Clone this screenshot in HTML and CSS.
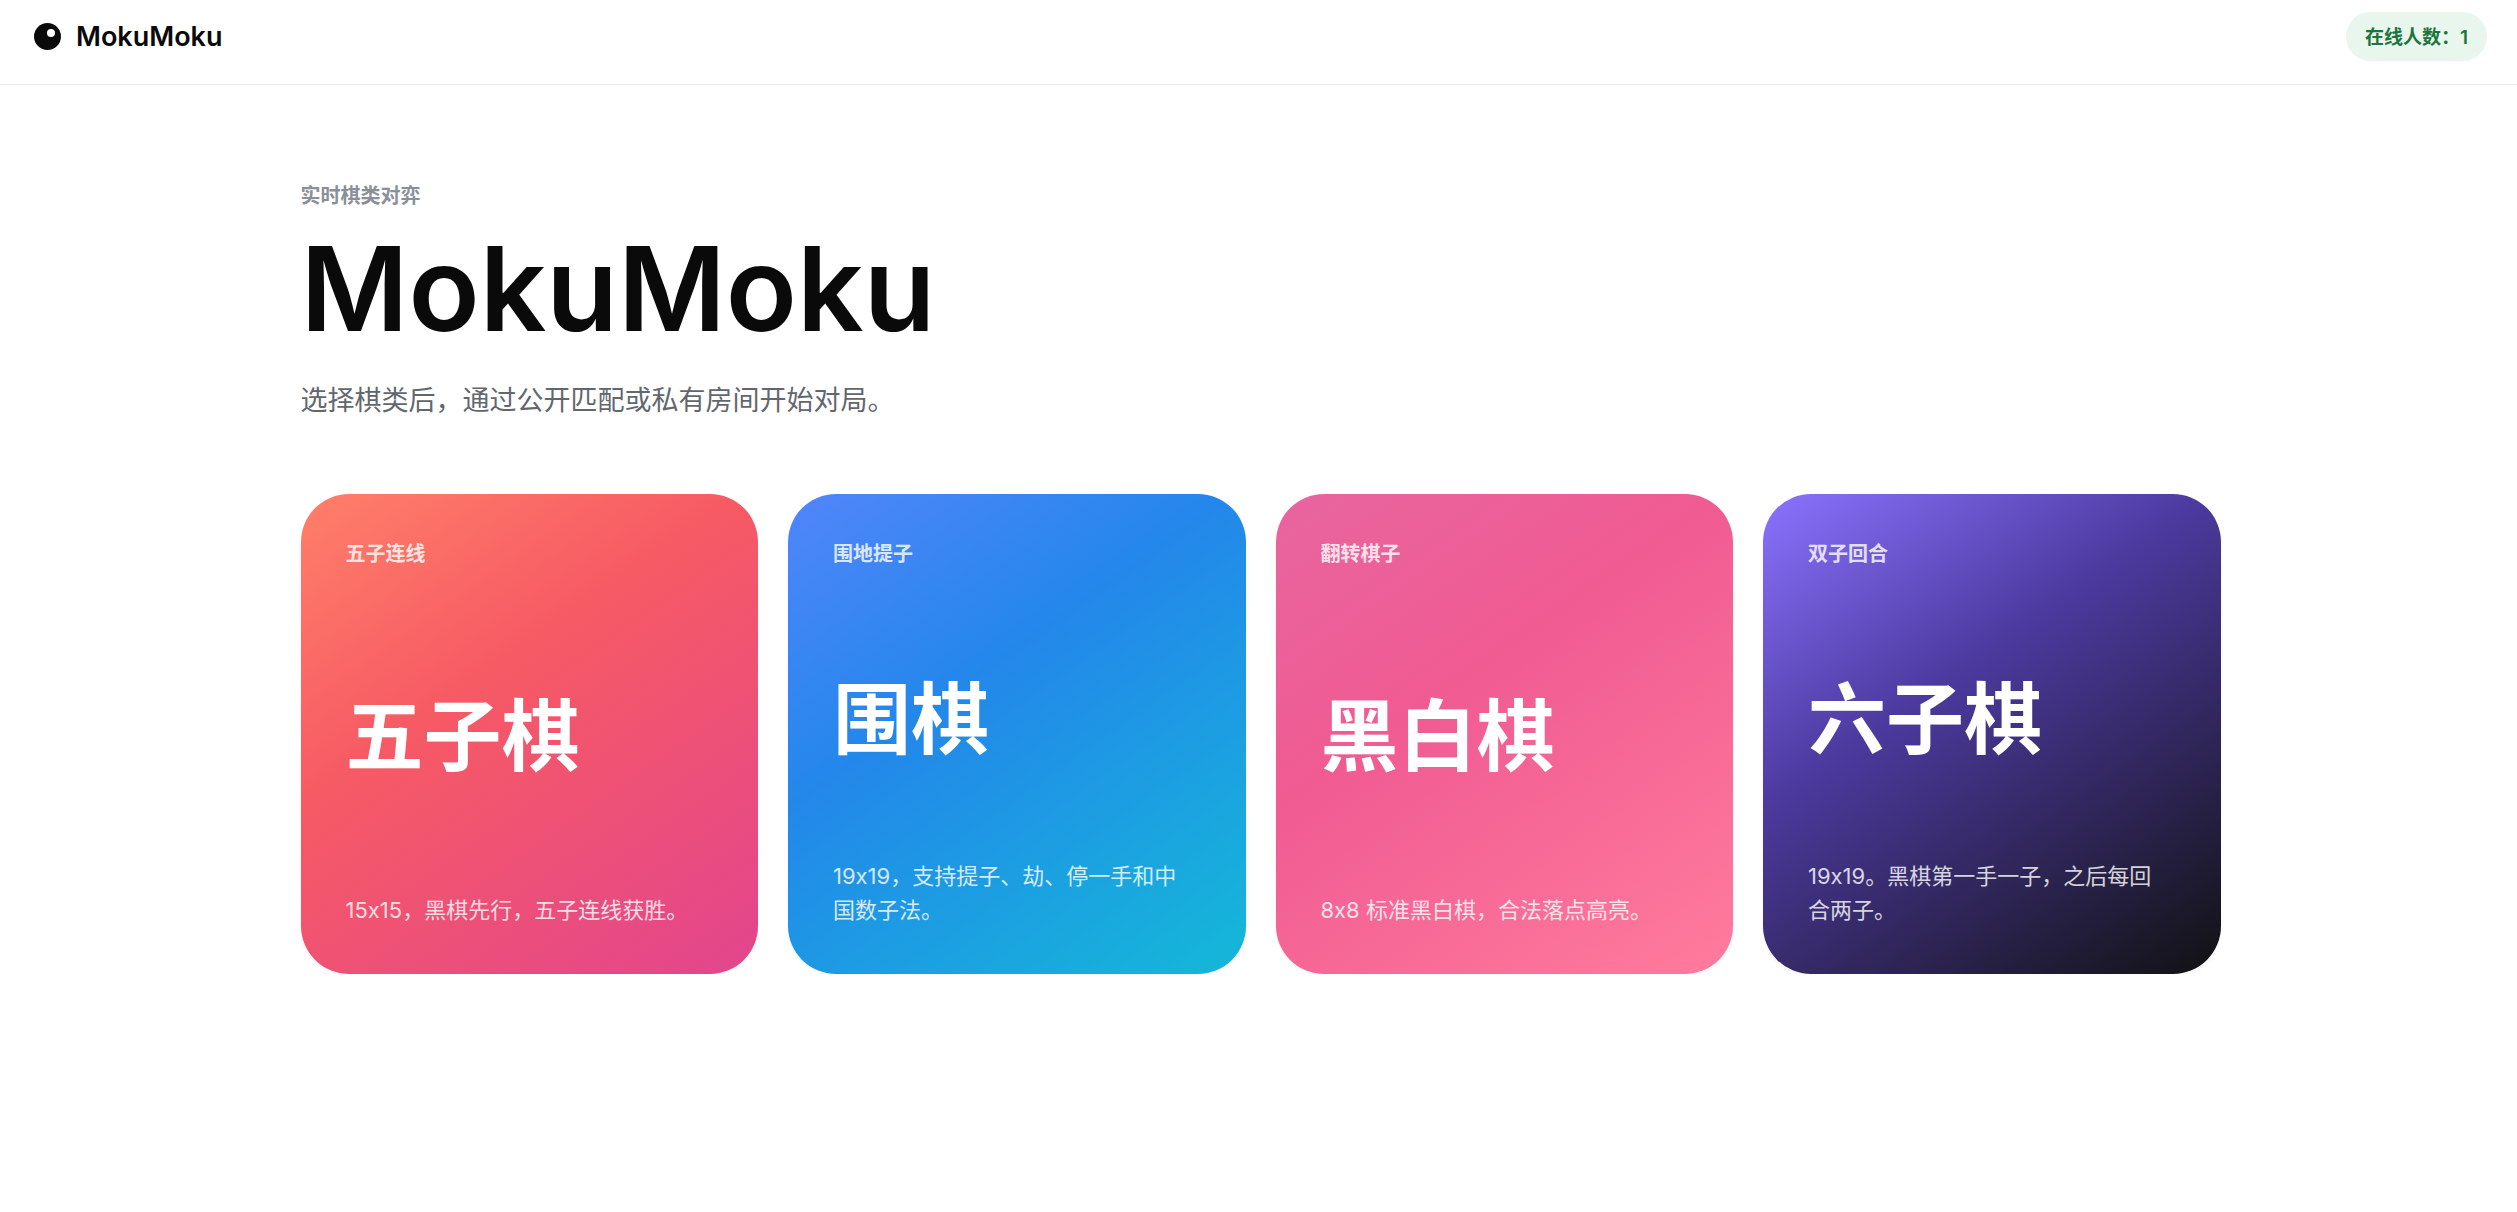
FILE: index.html
```html
<!DOCTYPE html>
<html lang="zh-CN">
	<head>
		<meta charset="utf-8">
		<title>MokuMoku</title>
		<link rel="stylesheet" href="styles.css">
	</head>
	<body>
		<header class="topbar">
			<a class="brand" href="#">
				<svg class="brand-mark" viewBox="0 0 27 27" aria-hidden="true">
					<circle cx="13.5" cy="13.5" r="13.5" fill="#0a0a0a"/>
					<circle cx="17" cy="10" r="4" fill="#fff"/>
				</svg>
				<span>MokuMoku</span>
			</a>
			<span class="online">在线人数：1</span>
		</header>

		<main class="home">
			<p class="eyebrow">实时棋类对弈</p>
			<h1 class="title">MokuMoku</h1>
			<p class="lead">选择棋类后，通过公开匹配或私有房间开始对局。</p>

			<div class="games">
				<a class="game gomoku" href="#gomoku">
					<span class="tag">五子连线</span>
					<strong class="name">五子棋</strong>
					<span class="desc">15x15，黑棋先行，五子连线获胜。</span>
				</a>
				<a class="game go" href="#go">
					<span class="tag">围地提子</span>
					<strong class="name">围棋</strong>
					<span class="desc">19x19，支持提子、劫、停一手和中国数子法。</span>
				</a>
				<a class="game reversi" href="#reversi">
					<span class="tag">翻转棋子</span>
					<strong class="name">黑白棋</strong>
					<span class="desc">8x8 标准黑白棋，合法落点高亮。</span>
				</a>
				<a class="game connect6" href="#connect6">
					<span class="tag">双子回合</span>
					<strong class="name">六子棋</strong>
					<span class="desc">19x19。黑棋第一手一子，之后每回合两子。</span>
				</a>
			</div>
		</main>
	</body>
</html>
```

FILE: styles.css
```css
* {
	box-sizing: border-box;
}

body {
	margin: 0;
	background: #fff;
	color: #0a0a0a;
	font-family: Inter, "Noto Sans CJK SC", sans-serif;
	/* keep the x in 19x19 a plain letter */
	font-feature-settings: "calt" 0;
}

a {
	color: inherit;
	text-decoration: none;
}

.topbar {
	display: flex;
	justify-content: space-between;
	align-items: center;
	padding: 12px 30px 23px 34px;
	border-bottom: 1px solid #ecece8;
}

.brand {
	display: flex;
	align-items: center;
	gap: 15px;
	font-size: 27px;
	line-height: 40px;
	font-weight: 600;
}

.brand-mark {
	width: 27px;
	height: 27px;
}

.online {
	padding: 11px 19px 8px;
	border-radius: 999px;
	background: #e9f6ee;
	color: #1d743c;
	font-size: 19px;
	line-height: 30px;
	font-weight: 600;
}

.home {
	max-width: 1984px;
	margin: 0 auto;
	padding: 96px 30px 0 34px;
}

.eyebrow {
	margin: 0 0 18px;
	color: #8a8f98;
	font-size: 20px;
	line-height: 30px;
	font-weight: 700;
}

.title {
	margin: 0 0 31px;
	font-size: 117px;
	line-height: 120px;
	font-weight: 600;
}

.lead {
	margin: 0 0 72px;
	color: #62666d;
	font-size: 27px;
	line-height: 42px;
}

.games {
	display: grid;
	grid-template-columns: repeat(4, 1fr);
	gap: 30px;
}

.game {
	display: flex;
	flex-direction: column;
	justify-content: space-between;
	min-height: 480px;
	padding: 45px 45px 47px;
	border-radius: 48px;
	box-shadow: 0 2px 4px rgba(0, 0, 0, 0.04);
	color: #fff;
}

.gomoku {
	background: linear-gradient(145deg, #ff7f69 0%, #f65a64 39%, #e2458d 100%);
}

.go {
	background: linear-gradient(145deg, #5285fb 0%, #2387ea 39%, #14b8d8 100%);
}

.reversi {
	background: linear-gradient(145deg, #e8659f 0%, #f05b92 39%, #ff7b9c 100%);
}

.connect6 {
	background: linear-gradient(145deg, #8b73ff 0%, #4c3a9f 39%, #111 100%);
}

.tag {
	font-size: 20px;
	line-height: 30px;
	font-weight: 700;
	opacity: 0.8;
}

.name {
	margin-top: 12px;
	font-size: 78px;
	line-height: 82px;
	font-weight: 700;
}

.desc {
	max-width: 360px;
	font-size: 22px;
	line-height: 34px;
	opacity: 0.8;
}
```
